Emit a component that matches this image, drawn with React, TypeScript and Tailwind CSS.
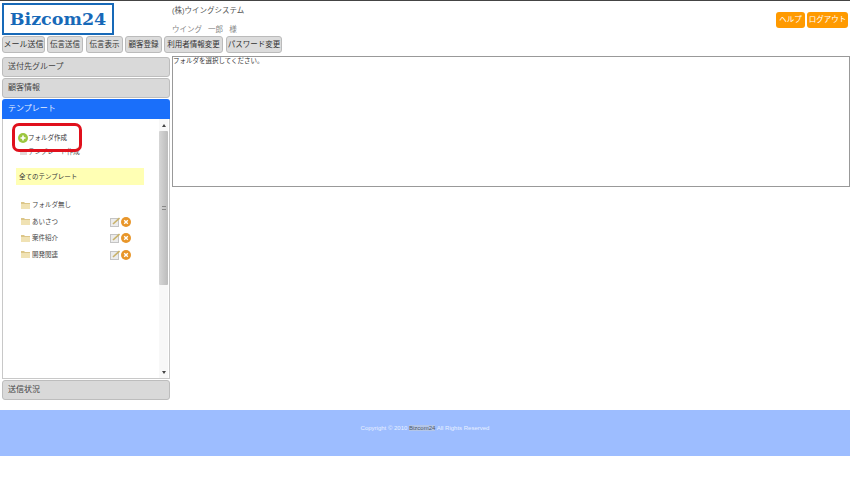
const jp = "font-['Liberation_Sans','Noto_Sans_CJK_JP',sans-serif]"

const navItems = [
  { label: 'メール送信', cls: 'w-[43px] mr-[2px] text-[8px]' },
  { label: '伝言送信', cls: 'w-[36px] mr-[3px] text-[7.5px]' },
  { label: '伝言表示', cls: 'w-[37px] mr-[2px] text-[7.5px]' },
  { label: '顧客登録', cls: 'w-[37px] mr-[2px] text-[7.5px]' },
  { label: '利用者情報変更', cls: 'w-[59px] mr-[3px] text-[7.5px]' },
  { label: 'パスワード変更', cls: 'w-[56px] text-[7.5px]' },
]

function Accordion({ label, active }: { label: string; active?: boolean }) {
  return (
    <div
      className={
        active
          ? 'h-[20px] bg-[#1a6ffa] rounded-t-[3px] pl-[6px] text-[8px] leading-[20px] text-[#e8f0ff]'
          : 'h-[20px] bg-[#d9d9d9] border border-[#bdbdbd] rounded-[3px] pl-[5px] text-[8px] leading-[18px] text-[#444]'
      }
    >
      {label}
    </div>
  )
}

function FolderIcon() {
  return (
    <svg width="9" height="7" viewBox="0 0 9 7" className="shrink-0">
      <path d="M0 0h3l1 1h5v6H0z" fill="#dcc689" />
      <path d="M0 2h9v5H0z" fill="#f0e2b4" />
    </svg>
  )
}

function EditDelete() {
  return (
    <div className="flex items-center gap-[1px]">
      <svg width="10" height="10" viewBox="0 0 10 10">
        <rect x="0.5" y="1.5" width="8" height="8" fill="#ececec" stroke="#c4c4c4" />
        <path d="M3 7L9.5 1" stroke="#c9b26a" strokeWidth="1.6" />
      </svg>
      <svg width="10" height="10" viewBox="0 0 10 10">
        <circle cx="5" cy="5" r="5" fill="#e8962a" />
        <path d="M3.2 3.2l3.6 3.6M6.8 3.2l-3.6 3.6" stroke="#fff" strokeWidth="1.4" />
      </svg>
    </div>
  )
}

function FolderRow({ label, actions }: { label: string; actions?: boolean }) {
  return (
    <div className="h-[16.5px] flex items-center pl-[18px]">
      <FolderIcon />
      <span className="ml-[2px] w-[78px] text-[6.5px] text-[#444]">{label}</span>
      {actions && <EditDelete />}
    </div>
  )
}

function Scrollbar() {
  return (
    <div className="w-[9px] mr-[1px] flex flex-col bg-[#f8f8f8]">
      <div className="h-[12px] flex items-center justify-center">
        <div className="border-x-[2px] border-x-transparent border-b-[3px] border-b-[#444]" />
      </div>
      <div className="h-[154px] bg-gradient-to-r from-[#d6d6d6] to-[#bcbcbc] rounded-[1px] flex items-center justify-center">
        <div className="w-[4px] h-[4px] border-y border-[#888]" />
      </div>
      <div className="mt-auto h-[12px] flex items-center justify-center">
        <div className="border-x-[2px] border-x-transparent border-t-[3px] border-t-[#444]" />
      </div>
    </div>
  )
}

export default function App() {
  return (
    <div className={`w-[850px] h-[495px] bg-white overflow-hidden border-t border-[#444] ${jp}`}>
      <header className="h-[35px] flex pl-[2px]">
        <div className="mt-[2px] w-[112px] h-[32px] border-2 border-[#1769b8] flex items-center justify-center font-['DejaVu_Serif',serif] font-bold text-[17.5px] text-[#1769b8]">
          Bizcom24
        </div>
        <div className="ml-[58px] pt-[4px] text-[7.5px] leading-[11px]">
          <div className="text-[#555]">(株)ウイングシステム</div>
          <div className="mt-[8px] text-[#888] [word-spacing:4px]">ウイング 一郎 様</div>
        </div>
        <div className="ml-auto mt-[11px] flex gap-[2px] pr-[2px]">
          <div className="w-[29px] h-[16px] bg-[#ff9a00] rounded-[3px] text-white text-[7.5px] leading-[16px] text-center">ヘルプ</div>
          <div className="w-[41px] h-[16px] bg-[#ff9a00] rounded-[3px] text-white text-[7.5px] leading-[16px] text-center">ログアウト</div>
        </div>
      </header>

      <nav className="h-[17px] flex pl-[2px]">
        {navItems.map((item) => (
          <div
            key={item.label}
            className={`${item.cls} h-[17px] bg-[#dcdcdc] border border-[#bbb] rounded-[3px] leading-[15px] text-center text-[#333] whitespace-nowrap`}
          >
            {item.label}
          </div>
        ))}
      </nav>

      <main className="mt-[4px] flex pl-[2px]">
        <aside className="relative w-[168px]">
          <div className="flex flex-col gap-[1px]">
            <Accordion label="送付先グループ" />
            <Accordion label="顧客情報" />
          </div>
          <div className="mt-[1px]">
            <Accordion label="テンプレート" active />
          </div>
          <div className="h-[260px] flex justify-between border-x border-b border-[#c8c8c8]">
            <div className="w-[156px]">
              <div className="mt-[13px] h-[12px] flex items-center pl-[15px] text-[6.5px] text-[#333]">
                <svg width="10" height="10" viewBox="0 0 10 10" className="shrink-0">
                  <circle cx="5" cy="5" r="5" fill="#9cc63f" />
                  <path d="M5 2.5v5M2.5 5h5" stroke="#fff" strokeWidth="1.6" />
                </svg>
                <span>フォルダ作成</span>
              </div>
              <div className="mt-[2px] h-[12px] flex items-center pl-[17px] text-[6.5px] text-[#555]">
                <div className="w-[7px] h-[6px] mr-[1px] bg-[#e4d8d8]" />
                <span>テンプレート作成</span>
              </div>
              <div className="mt-[10px] ml-[13px] w-[128px] h-[17px] bg-[#ffffb4] pl-[3px] text-[6.5px] leading-[17px] text-[#333]">
                全てのテンプレート
              </div>
              <div className="mt-[12px]">
                <FolderRow label="フォルダ無し" />
                <FolderRow label="あいさつ" actions />
                <FolderRow label="案件紹介" actions />
                <FolderRow label="開発関連" actions />
              </div>
            </div>
            <Scrollbar />
          </div>
          <div className="mt-[1px]">
            <Accordion label="送信状況" />
          </div>
          <div className="absolute left-[10px] top-[66px] w-[70px] h-[29px] border-[3px] border-[#e0101c] rounded-[7px]" />
        </aside>

        <section className="ml-[2px] -mt-[1px] w-[678px] h-[131px] border border-[#999] text-[6.5px] leading-[8px] text-[#333]">
          フォルダを選択してください。
        </section>
      </main>

      <footer className="mt-[10px] h-[46px] bg-[#9dbdff] flex items-center justify-center pb-[10px] font-['Liberation_Sans',sans-serif] text-[6px] text-[#e8f0ff]">
        <span>Copyright © 2010 <span className="text-[#4f5866] bg-[#b4c6e8]">Bizcom24</span> All Rights Reserved</span>
      </footer>
    </div>
  )
}
